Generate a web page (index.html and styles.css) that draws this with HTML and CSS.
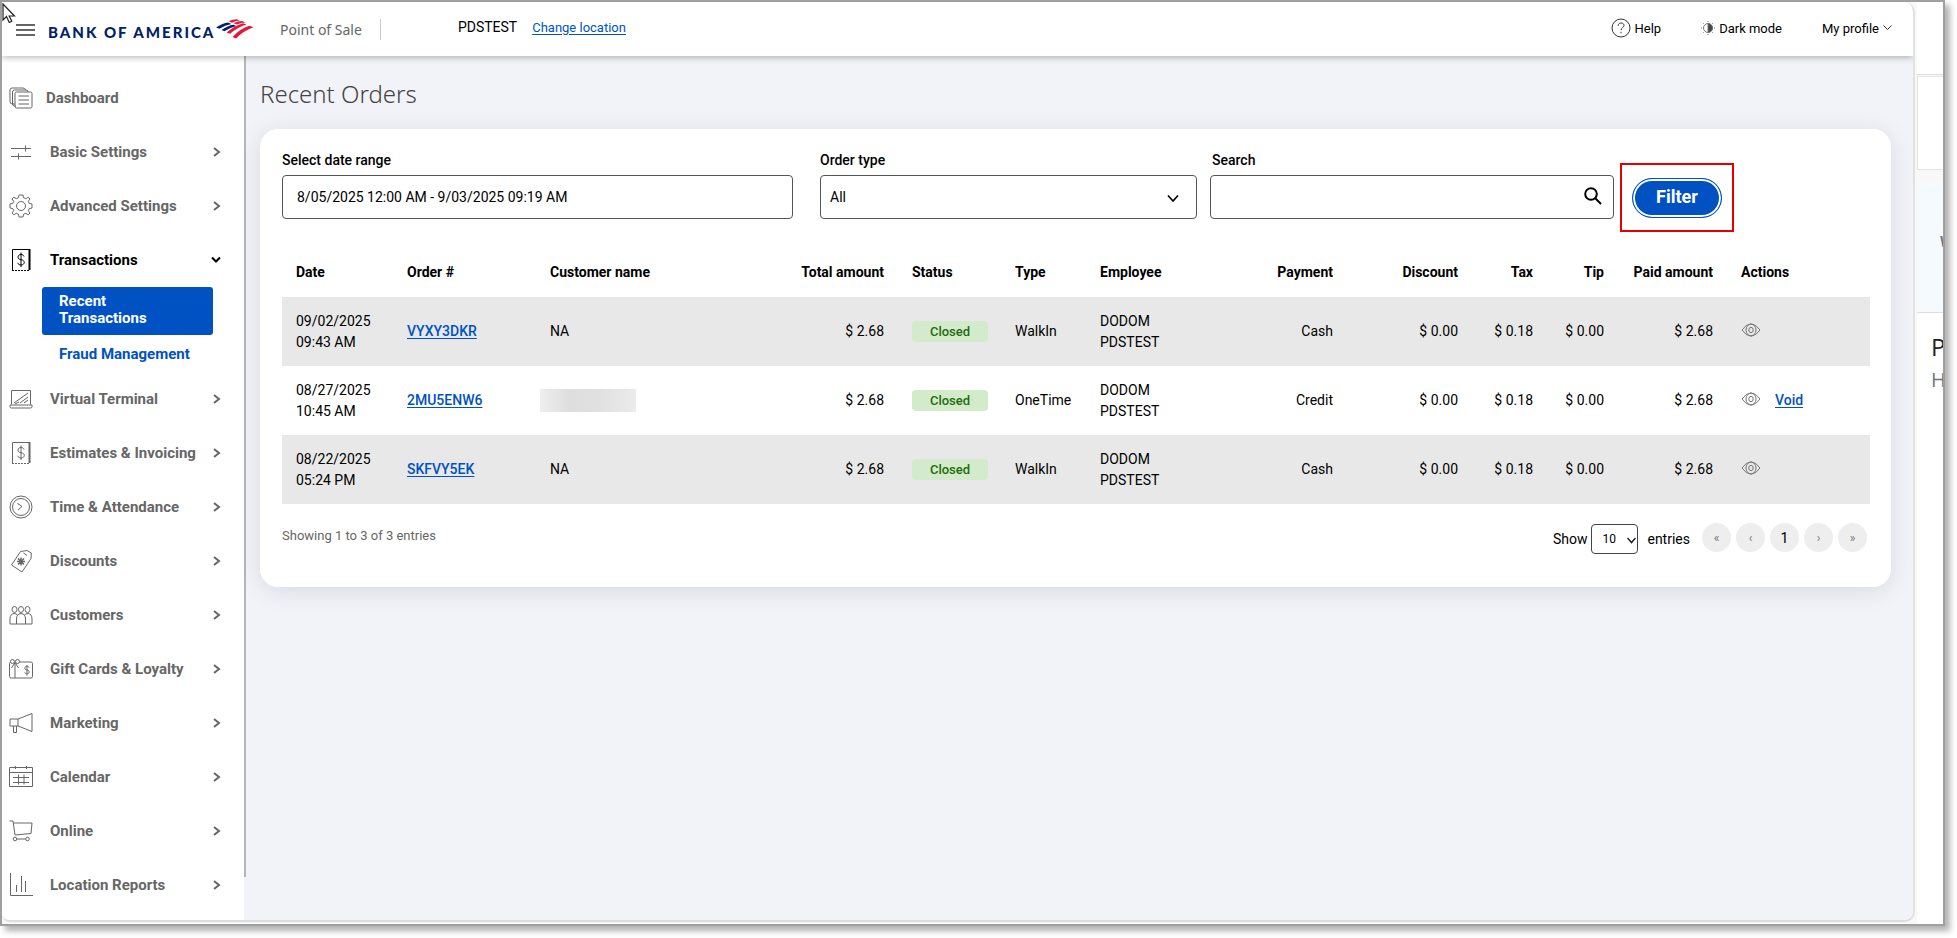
FILE: index.html
```html
<!DOCTYPE html>
<html lang="en">

<head>
    <meta charset="UTF-8">
    <meta name="viewport" content="width=device-width, initial-scale=1.0">
    <title>Recent Orders</title>
    <link rel="stylesheet" href="styles.css">
</head>

<body>

    <div class="frame">
        <svg class="cursor" width="14" height="20" viewBox="0 0 14 20"><path d="M1 1v16l3.500-3.500 2.800 6 2.500-1.200-2.600-5.300h5.300z" fill="#fff" stroke="#222" stroke-width="1.200"/></svg>

        <div class="app">
            <header class="header">
                <button class="menu-btn" aria-label="Menu"><span></span><span></span><span></span></button>
                <div class="logo">
                    <span class="logo-text">BANK OF AMERICA</span>
                    <svg width="38" height="20" viewBox="0 0 38 20">
                        <g fill="#012169">
                            <path d="M0 8.500Q7 4 12 3.500L15.500 5Q9 6 3.500 9.800z"/>
                            <path d="M5.500 11Q12 6.500 17.500 5.800L20.500 7Q14 8.500 8.500 12.300z"/>
                        </g>
                        <g fill="#e31837">
                            <path d="M12.500 2.300Q17 .3 20.500 .3L24 1.600Q20 1.600 16 3.700z"/>
                            <path d="M17.500 4.300Q22 2.200 26 2.100L29.500 3.500Q25 3.600 21 5.600z"/>
                            <path d="M10.500 13.400Q19 6.500 27 4.200L30.500 5.600Q22 8.200 14 14.800z"/>
                            <path d="M16.500 18Q24 9.500 33.500 6.700L37.500 8.300Q28 11.500 20 19.500z"/>
                        </g>
                    </svg>
                </div>
                <span class="product">Point of Sale</span>
                <span class="location">PDSTEST</span>
                <a class="change-location" href="#">Change location</a>
                <div class="header-right">
                    <button class="header-btn">
                        <svg width="20" height="20" viewBox="0 0 20 20" fill="none" stroke="#333"><circle cx="10" cy="10" r="9"/><path d="M7.200 7.800c0-3.800 5.800-3.600 5.800-.4 0 2.200-3 2.200-3 4.800M10 13.800v1.400"/></svg>
                        Help
                    </button>
                    <button class="header-btn">
                        <svg width="14" height="14" viewBox="0 0 14 14" fill="none" stroke="#777"><circle cx="7" cy="7" r="4.500"/><path d="M7 2.500a4.500 4.500 0 0 1 0 9z" fill="#444"/><path d="M7 0v1M7 13v1M0 7h1M13 7h1M2 2l.7.7M11.300 11.300l.7.7M2 12l.7-.7M11.300 2.700l.7-.7"/></svg>
                        Dark mode
                    </button>
                    <button class="header-btn">
                        My profile
                        <svg width="9" height="6" viewBox="0 0 9 6" fill="none" stroke="#333"><path d="M.5 .5l4 4 4-4"/></svg>
                    </button>
                </div>
            </header>

            <div class="content">
                <aside class="sidebar">
                    <nav class="nav">
                        <a class="nav-item nav-home" href="#">
                            <svg class="nav-icon" viewBox="0 0 24 24"><path d="M6 18H3.500Q1 18 1 15.500V4q0-2 2-2h11q2 0 2.500 2"/><path d="M7 20H5.500Q3.500 20 3.500 18V6q0-2 2-2H17q2 0 2 2"/><rect x="6" y="6" width="17" height="16" rx="1.500"/><path d="M9.500 10h10.500M9.500 14h10.500M9.500 18h10.500"/></svg>
                            <span>Dashboard</span>
                        </a>
                        <a class="nav-item" href="#">
                            <svg class="nav-icon" viewBox="0 0 24 24"><path d="M2 8.500h20M2 16.500h20M16.500 5.500v6M9.500 13.500v6"/></svg>
                            <span>Basic Settings</span>
                            <svg class="chevron" viewBox="0 0 8 10"><path d="M1 1l5 4-5 4"/></svg>
                        </a>
                        <a class="nav-item" href="#">
                            <svg class="nav-icon" viewBox="0 0 24 24"><circle cx="12" cy="12" r="4.500"/><path d="M10 1h4l.6 2.800 2.200.9L19.200 3.200 21 5l-1.700 2.300.9 2.100L23 10v4l-2.800.6-.9 2.100L21 19l-1.800 1.800-2.400-1.500-2.200.9L14 23h-4l-.6-2.800-2.200-.9-2.400 1.500L3 19l1.700-2.300-.9-2.100L1 14v-4l2.800-.6.9-2.100L3 5l1.800-1.800 2.400 1.500 2.200-.9z"/></svg>
                            <span>Advanced Settings</span>
                            <svg class="chevron" viewBox="0 0 8 10"><path d="M1 1l5 4-5 4"/></svg>
                        </a>
                        <a class="nav-item nav-open" href="#">
                            <svg class="nav-icon" viewBox="0 0 24 24"><path d="M20.500 22V1.500H3.500V22" /><path d="M20.500 1v21" stroke-width="2"/><path d="M3 22.500h18" stroke-dasharray="2 1"/><path d="M15 8.500c-.5-1.500-1.600-2-3-2-4 0-4 5 0 5.200 4.500.3 4.200 5.300 0 5.300-1.600 0-2.800-.7-3.300-2.200M12 4.500v14.500"/></svg>
                            <span>Transactions</span>
                            <svg class="chevron-down" viewBox="0 0 10 8"><path d="M1 1.500l4 4 4-4"/></svg>
                        </a>
                        <div class="submenu">
                            <a class="submenu-item submenu-active" href="#">Recent Transactions</a>
                            <a class="submenu-item" href="#">Fraud Management</a>
                        </div>
                        <a class="nav-item" href="#">
                            <svg class="nav-icon" viewBox="0 0 24 24"><path d="M2.500 17.500v-14h19v14M1 18h22v1.500q0 1.500-1.500 1.500h-19Q1 21 1 19.500zM5 16L19 6M11 16l8-6M15 16l4-3M6 17l4-2"/></svg>
                            <span>Virtual Terminal</span>
                            <svg class="chevron" viewBox="0 0 8 10"><path d="M1 1l5 4-5 4"/></svg>
                        </a>
                        <a class="nav-item" href="#">
                            <svg class="nav-icon" viewBox="0 0 24 24"><path d="M20.500 22V1.500H3.500V22" /><path d="M20.500 1v21" stroke-width="2"/><path d="M3 22.500h18" stroke-dasharray="2 1"/><path d="M15 8.500c-.5-1.500-1.600-2-3-2-4 0-4 5 0 5.200 4.500.3 4.200 5.300 0 5.300-1.600 0-2.800-.7-3.300-2.200M12 4.500v14.500"/></svg>
                            <span>Estimates &amp; Invoicing</span>
                            <svg class="chevron" viewBox="0 0 8 10"><path d="M1 1l5 4-5 4"/></svg>
                        </a>
                        <a class="nav-item" href="#">
                            <svg class="nav-icon" viewBox="0 0 24 24"><circle cx="12" cy="12" r="11"/><circle cx="12" cy="12" r="8.500"/><path d="M8.500 8.500l1.500 1M13 11.500L9 15"/><path d="M9.500 9l3.500 2.500"/></svg>
                            <span>Time &amp; Attendance</span>
                            <svg class="chevron" viewBox="0 0 8 10"><path d="M1 1l5 4-5 4"/></svg>
                        </a>
                        <a class="nav-item" href="#">
                            <svg class="nav-icon" viewBox="0 0 24 24"><path d="M11.500 2.500L2.500 16l10.500 7 9-13.500.3-5.500L18 1.500zM14.500 4l3.500 2.500"/><path d="M12 8.500v8M8 12.500h8M9 9.500l6 6M15 9.500l-6 6" stroke-width="1.500"/></svg>
                            <span>Discounts</span>
                            <svg class="chevron" viewBox="0 0 8 10"><path d="M1 1l5 4-5 4"/></svg>
                        </a>
                        <a class="nav-item" href="#">
                            <svg class="nav-icon" viewBox="0 0 24 24"><ellipse cx="5.500" cy="6.500" rx="2.500" ry="3"/><ellipse cx="12" cy="6.500" rx="2.500" ry="3"/><ellipse cx="18.500" cy="6.500" rx="2.500" ry="3"/><path d="M7.500 21H1v-5q0-5 4-5.500 2 0 3.500 1.500M7.500 21v-5q0-5 4.500-5.500 4.500.5 4.500 5.500v5zM16.500 21H23v-5q0-5-4-5.500-2 0-3.500 1.500"/></svg>
                            <span>Customers</span>
                            <svg class="chevron" viewBox="0 0 8 10"><path d="M1 1l5 4-5 4"/></svg>
                        </a>
                        <a class="nav-item" href="#">
                            <svg class="nav-icon" viewBox="0 0 24 24"><path d="M10.500 5H22q1.500 0 1.500 1.500v13q0 1.500-1.500 1.500H2Q.5 21 .5 19.500v-13Q.5 5 2 5M6 6v15M6 5.500L2.500 11M6 5.500L9.500 11"/><circle cx="3.500" cy="4.500" r="2"/><circle cx="8.500" cy="4.500" r="2"/><path d="M20 10.500c-.5-1-1.200-1.200-2-1.200-3 0-2.800 3.500 0 3.700 3 .3 2.800 3.800 0 3.800-1 0-1.900-.4-2.300-1.500M18 8v10.500"/></svg>
                            <span>Gift Cards &amp; Loyalty</span>
                            <svg class="chevron" viewBox="0 0 8 10"><path d="M1 1l5 4-5 4"/></svg>
                        </a>
                        <a class="nav-item" href="#">
                            <svg class="nav-icon" viewBox="0 0 24 24"><path d="M1 8h8v7H1zM9 8l14-5.500v18L9 15M4.500 15v6.500h3V15"/></svg>
                            <span>Marketing</span>
                            <svg class="chevron" viewBox="0 0 8 10"><path d="M1 1l5 4-5 4"/></svg>
                        </a>
                        <a class="nav-item" href="#">
                            <svg class="nav-icon" viewBox="0 0 24 24"><path d="M.5 2.500h23v19H.5zM.5 7.500h23M6.500 1v3M17.500 1v3M4 12.500h16M4 17.500h16M9.500 9.500v10M15 9.500v10"/></svg>
                            <span>Calendar</span>
                            <svg class="chevron" viewBox="0 0 8 10"><path d="M1 1l5 4-5 4"/></svg>
                        </a>
                        <a class="nav-item" href="#">
                            <svg class="nav-icon" viewBox="0 0 24 24"><path d="M.5 2H4l2 14 16-1.500L23 4H4.500M7.500 20h9"/><circle cx="6" cy="20" r="1.800"/><circle cx="18.500" cy="20" r="1.800"/></svg>
                            <span>Online</span>
                            <svg class="chevron" viewBox="0 0 8 10"><path d="M1 1l5 4-5 4"/></svg>
                        </a>
                        <a class="nav-item" href="#">
                            <svg class="nav-icon" viewBox="0 0 24 24"><path d="M1.500 0v22.500H24M7.500 12v7M12.500 3v16M16.500 8v11"/></svg>
                            <span>Location Reports</span>
                            <svg class="chevron" viewBox="0 0 8 10"><path d="M1 1l5 4-5 4"/></svg>
                        </a>
                    </nav>
                    <div class="scroll-thumb"></div>
                </aside>

                <main class="main">
                    <h1>Recent Orders</h1>

                    <section class="card">
                        <form class="filters">
                            <div class="field field-date">
                                <label for="date-range">Select date range</label>
                                <input type="text" id="date-range" value="8/05/2025 12:00 AM - 9/03/2025 09:19 AM">
                            </div>
                            <div class="field field-type">
                                <label for="order-type">Order type</label>
                                <div class="control">
                                    <select id="order-type">
                                        <option>All</option>
                                    </select>
                                    <svg class="select-arrow" width="12" height="9" viewBox="0 0 12 9"><path d="M1 1.500l5 5.500 5-5.500" fill="none" stroke="#000" stroke-width="1.700"/></svg>
                                </div>
                            </div>
                            <div class="field field-search">
                                <label for="search">Search</label>
                                <div class="control">
                                    <input type="text" id="search">
                                    <svg class="search-icon" width="18" height="18" viewBox="0 0 18 18" fill="none" stroke="#000" stroke-width="2"><circle cx="7" cy="7" r="5.800"/><path d="M11 11l6 6"/></svg>
                                </div>
                            </div>
                            <div class="highlight">
                                <button type="button" class="filter-btn">Filter</button>
                            </div>
                        </form>

                        <table class="orders">
                            <colgroup>
                                <col class="c-date">
                                <col class="c-order">
                                <col class="c-customer">
                                <col class="c-total">
                                <col class="c-status">
                                <col class="c-type">
                                <col class="c-employee">
                                <col class="c-payment">
                                <col class="c-discount">
                                <col class="c-tax">
                                <col class="c-tip">
                                <col class="c-paid">
                                <col class="c-actions">
                            </colgroup>
                            <thead>
                                <tr>
                                    <th>Date</th>
                                    <th>Order #</th>
                                    <th>Customer name</th>
                                    <th class="num">Total amount</th>
                                    <th>Status</th>
                                    <th>Type</th>
                                    <th>Employee</th>
                                    <th class="num">Payment</th>
                                    <th class="num">Discount</th>
                                    <th class="num">Tax</th>
                                    <th class="num">Tip</th>
                                    <th class="num">Paid amount</th>
                                    <th>Actions</th>
                                </tr>
                            </thead>
                            <tbody>
                                <tr>
                                    <td>09/02/2025<br>09:43 AM</td>
                                    <td><a href="#">VYXY3DKR</a></td>
                                    <td>NA</td>
                                    <td class="num">$ 2.68</td>
                                    <td><span class="badge">Closed</span></td>
                                    <td>WalkIn</td>
                                    <td>DODOM<br>PDSTEST</td>
                                    <td class="num">Cash</td>
                                    <td class="num">$ 0.00</td>
                                    <td class="num">$ 0.18</td>
                                    <td class="num">$ 0.00</td>
                                    <td class="num">$ 2.68</td>
                                    <td>
                                        <div class="actions">
                                            <button class="view-btn" aria-label="View order"><svg width="20" height="14" viewBox="0 0 20 14"><path d="M1 7Q5 1 10 1t9 6q-4 6-9 6T1 7z"/><ellipse cx="10" cy="7" rx="5" ry="6"/><ellipse cx="10" cy="7" rx="2.200" ry="2.700"/></svg></button>
                                        </div>
                                    </td>
                                </tr>
                                <tr>
                                    <td>08/27/2025<br>10:45 AM</td>
                                    <td><a href="#">2MU5ENW6</a></td>
                                    <td class="redacted-cell"><div class="redacted"></div></td>
                                    <td class="num">$ 2.68</td>
                                    <td><span class="badge">Closed</span></td>
                                    <td>OneTime</td>
                                    <td>DODOM<br>PDSTEST</td>
                                    <td class="num">Credit</td>
                                    <td class="num">$ 0.00</td>
                                    <td class="num">$ 0.18</td>
                                    <td class="num">$ 0.00</td>
                                    <td class="num">$ 2.68</td>
                                    <td>
                                        <div class="actions">
                                            <button class="view-btn" aria-label="View order"><svg width="20" height="14" viewBox="0 0 20 14"><path d="M1 7Q5 1 10 1t9 6q-4 6-9 6T1 7z"/><ellipse cx="10" cy="7" rx="5" ry="6"/><ellipse cx="10" cy="7" rx="2.200" ry="2.700"/></svg></button>
                                            <a href="#">Void</a>
                                        </div>
                                    </td>
                                </tr>
                                <tr>
                                    <td>08/22/2025<br>05:24 PM</td>
                                    <td><a href="#">SKFVY5EK</a></td>
                                    <td>NA</td>
                                    <td class="num">$ 2.68</td>
                                    <td><span class="badge">Closed</span></td>
                                    <td>WalkIn</td>
                                    <td>DODOM<br>PDSTEST</td>
                                    <td class="num">Cash</td>
                                    <td class="num">$ 0.00</td>
                                    <td class="num">$ 0.18</td>
                                    <td class="num">$ 0.00</td>
                                    <td class="num">$ 2.68</td>
                                    <td>
                                        <div class="actions">
                                            <button class="view-btn" aria-label="View order"><svg width="20" height="14" viewBox="0 0 20 14"><path d="M1 7Q5 1 10 1t9 6q-4 6-9 6T1 7z"/><ellipse cx="10" cy="7" rx="5" ry="6"/><ellipse cx="10" cy="7" rx="2.200" ry="2.700"/></svg></button>
                                        </div>
                                    </td>
                                </tr>
                            </tbody>
                        </table>

                        <div class="table-footer">
                            <p class="summary">Showing 1 to 3 of 3 entries</p>
                            <div class="page-size">
                                <label for="page-size">Show</label>
                                <div class="control">
                                    <select id="page-size">
                                        <option>10</option>
                                    </select>
                                    <svg class="size-arrow" width="9" height="7" viewBox="0 0 9 7"><path d="M.5 1l4 4.500 4-4.500" fill="none" stroke="#222" stroke-width="1.500"/></svg>
                                </div>
                                <span class="entries">entries</span>
                            </div>
                            <div class="pager">
                                <button aria-label="First page">«</button>
                                <button aria-label="Previous page">‹</button>
                                <button class="current">1</button>
                                <button aria-label="Next page">›</button>
                                <button aria-label="Last page">»</button>
                            </div>
                        </div>
                    </section>
                </main>
            </div>
        </div>

        <!-- page showing behind the app window -->
        <div class="behind">
            <div class="behind-top"></div>
            <div class="behind-box"></div>
            <div class="behind-gap"></div>
            <div class="behind-banner">W</div>
            <div class="behind-text">
                <div class="behind-title">P</div>
                <div class="behind-sub">H</div>
            </div>
        </div>
    </div>

</body>

</html>
```
FILE: styles.css
```css
* {
    box-sizing: border-box;
}

body {
    margin: 0;
    font-family: Roboto, "Liberation Sans", sans-serif;
    font-size: 14px;
    color: #000;
    background-color: #fff;
}

button,
input,
select {
    font-family: inherit;
    font-size: 14px;
    color: #000;
}

button {
    border: none;
    padding: 0;
    background: none;
}

a {
    color: #0052c2;
    font-weight: 500;
    text-underline-offset: 2px;
}

.frame {
    position: relative;
    display: flex;
    height: calc(100vh - 12px);
    margin: 0 12px 12px 0;
    border: 2px solid #a0a0a0;
    background-color: #f8f8f8;
    box-shadow: 5px 5px 6px rgba(0, 0, 0, 0.3);
}

.cursor {
    position: absolute;
    top: 1px;
    left: 0;
    z-index: 2;
}

.app {
    flex: 1;
    min-width: 0;
    display: flex;
    flex-direction: column;
    margin-bottom: 2px;
    border-right: 2px solid #e2e2e2;
    border-bottom: 2px solid #dcdcdc;
    border-radius: 0 10px 10px 8px;
    background-color: #f2f3f8;
    overflow: hidden;
}

/* header */

.header {
    position: relative;
    display: flex;
    align-items: center;
    flex: none;
    height: 54px;
    padding: 0 21px 0 14px;
    background-color: #fff;
    box-shadow: 0 2px 6px rgba(0, 0, 0, 0.25);
}

.menu-btn {
    display: flex;
    flex-direction: column;
    gap: 3px;
    width: 19px;
    margin: 2px 13px 0 0;
}

.menu-btn span {
    height: 2px;
    background-color: #666;
}

.logo {
    display: flex;
    align-items: center;
    justify-content: space-between;
    width: 206px;
}

.logo-text {
    font-family: Lato, sans-serif;
    font-size: 15px;
    font-weight: 900;
    line-height: 20px;
    letter-spacing: 2px;
    color: #012169;
    padding-top: 6px;
    white-space: nowrap;
}

.logo svg {
    flex: none;
    margin-left: -4px;
}

.product {
    margin-left: 26px;
    padding-right: 18px;
    border-right: 1px solid #ccc;
    font-family: "Noto Sans", sans-serif;
    line-height: 21px;
    color: #666;
}

.location {
    margin: 0 15px 4px 77px;
}

.change-location {
    margin-bottom: 4px;
    font-size: 13px;
    font-weight: 400;
}

.header-right {
    display: flex;
    gap: 40px;
    margin: 0 0 2px auto;
}

.header-btn {
    display: flex;
    align-items: center;
    gap: 4px;
    font-size: 13px;
}

/* sidebar */

.content {
    display: flex;
    flex: 1;
    min-height: 0;
}

.sidebar {
    display: flex;
    flex: none;
    width: 244px;
}

.nav {
    flex: 1;
    padding-top: 15px;
    background-color: #fff;
}

.scroll-thumb {
    width: 2px;
    height: 95%;
    background-color: #b4b6b9;
}

.nav-item {
    display: flex;
    align-items: center;
    height: 54px;
    padding: 0 23px 0 7px;
    color: #666;
    font-size: 15px;
    font-weight: 700;
    text-decoration: none;
}

.nav-item span {
    flex: 1;
    margin-left: 17px;
    white-space: nowrap;
}

.nav-home span {
    margin-left: 13px;
}

.nav-open {
    color: #000;
}

.nav-icon {
    width: 24px;
    height: 24px;
    fill: none;
    stroke: currentColor;
}

.chevron,
.chevron-down {
    width: 8px;
    height: 10px;
    fill: none;
    stroke: currentColor;
    stroke-width: 2;
}

.chevron-down {
    width: 10px;
    height: 8px;
}

.submenu {
    padding-left: 40px;
}

.submenu-item {
    display: flex;
    align-items: center;
    width: 171px;
    height: 37px;
    padding: 2px 0 0 17px;
    font-size: 15px;
    font-weight: 700;
    line-height: 17px;
    text-decoration: none;
    white-space: nowrap;
}

.submenu-active {
    height: 48px;
    padding: 0 40px 2px 17px;
    border-radius: 3px;
    background-color: #0052c2;
    color: #fff;
    white-space: normal;
}

/* orders */

.main {
    flex: 1;
    min-width: 0;
    padding: 20px 22px 0 14px;
}

h1 {
    margin: 0 0 17px;
    font-family: "Noto Sans", sans-serif;
    font-size: 24px;
    font-weight: 300;
    line-height: 36px;
    color: #444;
}

.card {
    padding: 22px 21px 25px 22px;
    border-radius: 18px;
    background-color: #fff;
    box-shadow: 0 4px 24px rgba(0, 0, 0, 0.1);
}

.filters {
    display: flex;
    height: 112px;
}

.field {
    display: flex;
    flex-direction: column;
}

.field label {
    height: 24px;
    font-weight: 500;
    line-height: 18px;
}

.field-date {
    flex: 511;
    margin-right: 27px;
}

.field-type {
    flex: 377;
    margin-right: 13px;
}

.field-search {
    flex: 404;
}

.field-search label {
    padding-left: 2px;
}

.control {
    position: relative;
}

.field input,
.field select {
    width: 100%;
    height: 44px;
    padding: 0 14px;
    border: 1px solid #555;
    border-radius: 4px;
    background-color: #fff;
}

.field select {
    appearance: none;
    padding: 0 9px;
}

.select-arrow {
    position: absolute;
    top: 19px;
    right: 18px;
}

.search-icon {
    position: absolute;
    top: 12px;
    right: 12px;
}

.highlight {
    display: flex;
    align-items: center;
    justify-content: center;
    width: 114px;
    height: 69px;
    margin: 12px 136px 0 6px;
    border: 2px solid #e80000;
}

.filter-btn {
    width: 90px;
    height: 40px;
    padding-bottom: 2px;
    border: 1px solid #0052c2;
    border-radius: 20px;
    background-color: #0052c2;
    box-shadow: inset 0 0 0 2px #fff;
    color: #fff;
    font-size: 18px;
    font-weight: 700;
}

.orders {
    width: 100%;
    table-layout: fixed;
    border-collapse: collapse;
}

.c-date { width: 111px; }
.c-order { width: 143px; }
.c-customer { width: 249px; }
.c-total { width: 113px; }
.c-status { width: 103px; }
.c-type { width: 85px; }
.c-employee { width: 174px; }
.c-payment { width: 87px; }
.c-discount { width: 125px; }
.c-tax { width: 75px; }
.c-tip { width: 71px; }
.c-paid { width: 109px; }
.c-actions { width: 143px; }

.orders th {
    height: 34px;
    padding: 0 14px 16px;
    font-weight: 700;
    line-height: 18px;
    text-align: left;
    white-space: nowrap;
}

.orders td {
    height: 69px;
    padding: 0 14px;
    line-height: 21px;
    white-space: nowrap;
}

.orders .num {
    text-align: right;
}

.orders tbody tr:nth-child(odd) {
    background-color: #e8e8e8;
}

.badge {
    display: block;
    width: 76px;
    border-radius: 4px;
    background-color: #d3ebca;
    color: #1e6b0e;
    font-size: 13px;
    font-weight: 500;
    text-align: center;
}

.orders .redacted-cell {
    padding-left: 4px;
}

.redacted {
    width: 96px;
    height: 23px;
    background: linear-gradient(90deg, #eee, #dedede 30%, #e0e0e0 60%, #ebebeb);
}

.actions {
    display: flex;
    align-items: center;
    gap: 14px;
}

.view-btn {
    padding-bottom: 4px;
}

.view-btn svg {
    display: block;
    fill: none;
    stroke: #777;
}

.table-footer {
    display: flex;
    align-items: center;
    height: 49px;
    margin-top: 9px;
    padding-right: 3px;
}

.summary {
    margin: 0 auto 5px 0;
    color: #666;
    font-size: 13px;
}

.page-size {
    display: flex;
    align-items: center;
    gap: 4px;
    padding-top: 2px;
}

.page-size select {
    appearance: none;
    width: 47px;
    height: 30px;
    padding: 0 10px;
    border: 1px solid #444;
    border-radius: 4px;
    background-color: #fff;
    font-size: 12px;
}

.size-arrow {
    position: absolute;
    top: 13px;
    right: 2px;
}

.entries {
    margin: 0 12px 0 5px;
}

.pager {
    display: flex;
    gap: 5px;
}

.pager button {
    width: 29px;
    height: 29px;
    border-radius: 50%;
    background-color: #eee;
    color: #777;
    font-size: 12px;
}

.pager .current {
    color: #000;
    font-size: 14px;
}

/* strip on the right */

.behind {
    display: flex;
    flex-direction: column;
    flex: none;
    width: 28px;
    padding-left: 2px;
    overflow: hidden;
}

.behind-top {
    height: 73px;
    border-bottom: 1px solid #ddd;
    background-color: #fff;
}

.behind-box {
    height: 94px;
    margin-top: 1px;
    border: 1px solid #e5e5e5;
    border-right: none;
    background-color: #fff;
}

.behind-gap {
    height: 12px;
}

.behind-banner {
    height: 131px;
    padding: 52px 0 0 23px;
    border-bottom: 1px solid #ddd;
    background-color: #f5fafe;
    color: #6b7785;
    font-weight: 700;
}

.behind-text {
    flex: 1;
    padding: 18px 0 0 14px;
    background-color: #fff;
    font-family: "Open Sans", sans-serif;
}

.behind-title {
    color: #222;
    font-size: 24px;
    line-height: 32px;
}

.behind-sub {
    color: #6b7785;
    font-size: 20px;
    line-height: 34px;
}
```
